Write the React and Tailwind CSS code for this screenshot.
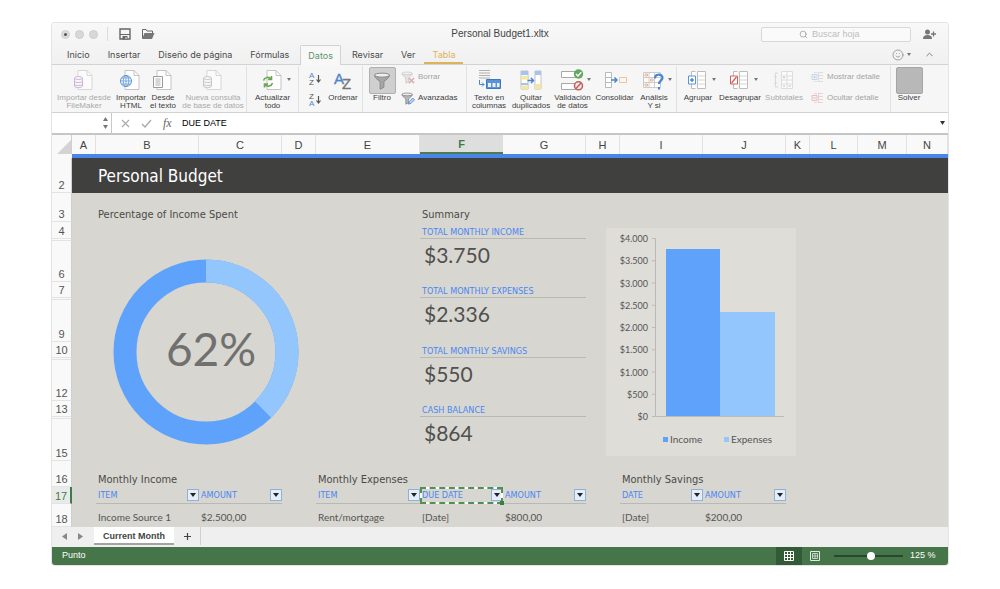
import { ChevronUp, Search, Smile } from 'lucide-react';

const LABEL_FONT = "font-['Tahoma','DejaVu_Sans_Condensed',sans-serif]";
const VALUE_FONT = "font-['Century_Gothic','Lato',sans-serif]";

const tabs = ['Inicio', 'Insertar', 'Diseño de página', 'Fórmulas', 'Datos', 'Revisar', 'Ver', 'Tabla'];

const columns = [
  { name: 'A', width: 'w-[24px]' },
  { name: 'B', width: 'w-[103px]' },
  { name: 'C', width: 'w-[83px]' },
  { name: 'D', width: 'w-[34px]' },
  { name: 'E', width: 'w-[104px]' },
  { name: 'F', width: 'w-[83px]' },
  { name: 'G', width: 'w-[83px]' },
  { name: 'H', width: 'w-[34px]' },
  { name: 'I', width: 'w-[83px]' },
  { name: 'J', width: 'w-[83px]' },
  { name: 'K', width: 'w-[24px]' },
  { name: 'L', width: 'w-[48px]' },
  { name: 'M', width: 'w-[49px]' },
  { name: 'N', width: '' },
];

const summary = [
  { label: 'TOTAL MONTHLY INCOME', value: '$3.750', row: 4 },
  { label: 'TOTAL MONTHLY EXPENSES', value: '$2.336', row: 7 },
  { label: 'TOTAL MONTHLY SAVINGS', value: '$550', row: 10 },
  { label: 'CASH BALANCE', value: '$864', row: 13 },
];

const axisLabels = ['$4.000', '$3.500', '$3.000', '$2.500', '$2.000', '$1.500', '$1.000', '$500', '$0'];

/* ---------- ribbon icons ---------- */

const Icon = ({ children, w = 24 }) => (
  <svg width={w} height="22" viewBox={`0 0 ${w} 22`} fill="none" aria-hidden="true">
    {children}
  </svg>
);

const Page = () => (
  <>
    <path d="M6 1.500h9l5 5v14H6z" fill="#fff" stroke="#bdbdbd" strokeWidth="0.9" />
    <path d="M15 1.500v5h5" stroke="#bdbdbd" strokeWidth="0.9" />
  </>
);

const Cylinder = ({ color }) => (
  <g stroke={color} fill="#f7f7f7">
    <path d="M2.500 9v8c0 1 1.600 1.500 4 1.500s4-.5 4-1.500V9" />
    <path d="M2.500 12c0 1 1.600 1.500 4 1.500s4-.5 4-1.500M2.500 15c0 1 1.600 1.500 4 1.500s4-.5 4-1.500" fill="none" />
    <ellipse cx="6.500" cy="9" rx="4" ry="1.500" />
  </g>
);

const FileMakerIcon = () => (
  <Icon>
    <g opacity="0.6">
      <Page />
      <Cylinder color="#b48bc8" />
    </g>
  </Icon>
);

const QueryIcon = () => (
  <Icon>
    <g opacity="0.6">
      <Page />
      <Cylinder color="#a8a8a8" />
    </g>
  </Icon>
);

const HtmlIcon = () => (
  <Icon>
    <Page />
    <circle cx="7" cy="12" r="5.500" fill="#f4f9fe" stroke="#5a94d6" />
    <path d="M1.500 12h11M7 6.500v11M2.500 9h9M2.500 15h9" stroke="#5a94d6" strokeWidth="0.7" />
    <ellipse cx="7" cy="12" rx="2.800" ry="5.500" stroke="#5a94d6" strokeWidth="0.8" />
  </Icon>
);

const TextIcon = () => (
  <Icon>
    <Page />
    <path d="M2.500 7.500h9v11h-9z" fill="#fff" stroke="#9a9a9a" />
    <path d="M4.500 10h5M4.500 12h5M4.500 14h5M4.500 16h5" stroke="#9a9a9a" strokeWidth="0.8" />
  </Icon>
);

const RefreshIcon = () => (
  <Icon>
    <Page />
    <path d="M2.500 11.500c1-3.500 5.500-4 7.500-1.500M10.500 7v3.500H7M11.500 14c-1 3.500-5.500 4-7.500 1.500M3.500 18.500V15H7" stroke="#6aa84f" strokeWidth="1.600" />
  </Icon>
);

const SortIcon = ({ top, bottom }) => (
  <svg width="14" height="15" viewBox="0 0 14 15" fill="none" aria-hidden="true">
    <text x="1" y="7" fontSize="8" fill={top === 'A' ? '#4f87cc' : '#555'} fontFamily="Liberation Sans">{top}</text>
    <text x="1" y="14" fontSize="8" fill={bottom === 'A' ? '#4f87cc' : '#555'} fontFamily="Liberation Sans">{bottom}</text>
    <path d="M10.500 4v7M8.500 8.500l2 2.500 2-2.500" stroke="#555" strokeWidth="1.200" />
  </svg>
);

const OrderIcon = () => (
  <Icon>
    <text x="3" y="15" fontSize="15" fill="#4f87cc" stroke="#4f87cc" strokeWidth="0.4" fontFamily="Liberation Sans">A</text>
    <text x="11" y="20" fontSize="15" fill="#777" stroke="#777" strokeWidth="0.4" fontFamily="Liberation Sans">Z</text>
  </Icon>
);

const FunnelShape = ({ color = '#8b8b8b', fill = '#b9b9b9' }) => (
  <>
    <path d="M1 3c0 1.500 2 3 4.500 5v6l3-1.500V8C11 6 13 4.500 13 3z" fill={fill} stroke={color} strokeWidth="0.8" />
    <ellipse cx="7" cy="2.800" rx="6" ry="1.600" fill="#eee" stroke={color} strokeWidth="0.8" />
  </>
);

const FilterIcon = () => (
  <svg width="20" height="20" viewBox="-1 0 16 15" aria-hidden="true"><FunnelShape color="#8a8a8a" fill="#a6a6a6" /></svg>
);

const ClearFilterIcon = () => (
  <svg width="14" height="13" viewBox="0 0 16 15" fill="none" aria-hidden="true">
    <g opacity="0.5">
      <FunnelShape fill="#d6d6d6" />
      <path d="M9 8l6 6M15 8l-6 6" stroke="#cc6262" strokeWidth="1.800" />
    </g>
  </svg>
);

const AdvancedFilterIcon = () => (
  <svg width="14" height="13" viewBox="0 0 16 15" fill="none" aria-hidden="true">
    <FunnelShape color="#777" />
    <path d="M8.500 14l1-3 4-4 2 2-4 4z" fill="#bcd6f5" stroke="#4a84cf" />
  </svg>
);

const ColumnsIcon = () => (
  <Icon>
    <path d="M2 1.500h11M2 4h11M2 6.500h11M2 9h11" stroke="#b0b0b0" />
    <path d="M9.500 10.500h14v9h-14z" fill="#5b93d8" stroke="#3f78c0" />
    <path d="M11 14h3v4h-3zM15.500 14h3v4h-3zM20 14h2.500v4H20z" fill="#e9f2fc" />
    <path d="M2.500 11v4.500h4.500M5 13.500l2 2-2 2" stroke="#4a86d0" />
  </Icon>
);

const DuplicatesIcon = () => (
  <Icon>
    <path d="M2 2h7v18H2zM16 2h6v18h-6z" fill="#fff" stroke="#b5b5b5" strokeWidth="0.8" />
    <path d="M2 2h7v4H2zM2 14h7v2H2zM16 2h6v4h-6z" fill="#a5c4ee" />
    <path d="M2 7h7v3.500H2zM2 16.500h7V20H2zM16 15h6v5h-6z" fill="#f6e79f" />
    <path d="M8.500 11.500h6M12 9l2.500 2.500L12 14" stroke="#4a86d0" strokeWidth="1.500" />
  </Icon>
);

const ValidationIcon = () => (
  <Icon>
    <path d="M.5 2.500h14v6H.5zM.5 14.500h14v6H.5z" fill="#fff" stroke="#a8a8a8" />
    <circle cx="17.500" cy="5" r="4.700" fill="#62a960" />
    <path d="M15 5l2 2 3.300-3.800" stroke="#fff" strokeWidth="1.400" />
    <circle cx="17.500" cy="16.800" r="4" fill="#f8e9e9" stroke="#c4605d" strokeWidth="1.600" />
    <path d="M15 19.500l5-5.500" stroke="#c4605d" strokeWidth="1.500" />
  </Icon>
);

const ConsolidateIcon = () => (
  <Icon>
    <path d="M2.500 3.500h6v15h-6zM2.500 8.500h6M2.500 13.500h6" fill="#fff" stroke="#b9b9b9" />
    <path d="M16.500 8.500h7v5h-7z" fill="#fff6ee" stroke="#ecc5a6" />
    <path d="M8 11h6M11.500 8.500L14 11l-2.500 2.500" stroke="#4a86d0" strokeWidth="1.500" />
  </Icon>
);

const WhatIfIcon = () => (
  <Icon>
    <path d="M1.500 3.500h17v15h-17zM1.500 8.500h17M1.500 13.500h17M7 3.500v15M12.500 3.500v15" fill="#fff" stroke="#c2c2c2" strokeWidth="0.8" />
    <path d="M3 5h2.500v2H3zM8.500 10h2.500v2H8.500zM3 15h2.500v2H3z" stroke="#e8b08c" />
    <path d="M13 9.500c0-5 7.500-5 7.500-.8 0 3-3.500 3-3.500 6.300M17 18v2.500" stroke="#4a86d0" strokeWidth="2.200" />
  </Icon>
);

const GroupIcon = ({ ungroup }) => (
  <Icon>
    <path d="M9.500 2.500h-4v17h4M11.500 2.500h8v17h-8z" fill="#fff" stroke="#bdbdbd" />
    <path d="M12 7h7M12 11h7M12 15h7" stroke="#d4d4d4" />
    <path d="M2.500 7h7v8h-7z" fill="#fff" stroke={ungroup ? '#d0605c' : '#5a94d6'} />
    <path d={ungroup ? 'M3.500 14l5-6' : 'M6 9v4M4 11h4'} stroke={ungroup ? '#d0605c' : '#4a86d0'} strokeWidth="1.300" />
  </Icon>
);

const SubtotalIcon = () => (
  <Icon>
    <g opacity="0.6">
      <path d="M9.500 2.500h11v17h-11zM9.500 7h11M9.500 11h11M9.500 15h11M15 2.500v17" fill="#fff" stroke="#cdcdcd" />
      <path d="M6 4H3.500v14H6M2 8h3M2 14h3" stroke="#c6c6c6" />
      <path d="M11 8.500h2M11 17h2M16.500 17h2.500" stroke="#d88" />
    </g>
  </Icon>
);

const DetailIcon = ({ hide }) => (
  <svg width="13" height="12" viewBox="0 0 13 12" fill="none" aria-hidden="true" className="opacity-50">
    <path d="M3 1.500h3M3 10.500h3M7.500 1v10M7.500 1.500H12M7.500 4.500H12M7.500 7.500H12M7.500 10.500H12" stroke={hide ? '#dba0a0' : '#b9b9b9'} strokeWidth="0.8" />
    <path d="M1 3.500h5v5H1zM2 6h3" stroke={hide ? '#d77' : '#8fb0d8'} strokeWidth="0.9" />
    {!hide && <path d="M3.500 4.500v3" stroke="#8fb0d8" />}
  </svg>
);

const Caret = ({ className = '' }) => (
  <svg width="4" height="3" viewBox="0 0 4 3" aria-hidden="true" className={className}>
    <path d="M0 0h4L2 3z" fill="#777" />
  </svg>
);

/* ---------- ribbon ---------- */

function RibbonButton({ icon, lines, width, muted, menu }) {
  return (
    <button className={`flex shrink-0 flex-col items-center text-[8px] leading-[8px] ${width} ${muted ? 'text-[#a9a9a9]' : 'text-[#3d3d3d]'}`}>
      <span className="relative mb-[3px] flex h-[22px] items-center">
        {icon}
        {menu && <Caret className="absolute top-[9px] -right-[6px]" />}
      </span>
      {lines.map((line) => (
        <span key={line} className="whitespace-nowrap">{line}</span>
      ))}
    </button>
  );
}

const Divider = () => <span className="-my-[3px] w-px shrink-0 bg-[#e0e0e0]" />;

function SmallButton({ icon, label, muted }) {
  return (
    <button className={`flex items-center gap-[3px] text-[8px] leading-[14px] whitespace-nowrap ${muted ? 'text-[#a3a3a3]' : 'text-[#3d3d3d]'}`}>
      {icon}
      {label}
    </button>
  );
}

function Ribbon() {
  return (
    <div className="flex h-[49px] overflow-hidden border-t border-b border-[#d2d2d2] bg-[#f6f6f6] pt-[4px]">
      <RibbonButton icon={<FileMakerIcon />} lines={['Importar desde', 'FileMaker']} width="w-[64px]" muted />
      <RibbonButton icon={<HtmlIcon />} lines={['Importar', 'HTML']} width="w-[30px]" />
      <RibbonButton icon={<TextIcon />} lines={['Desde', 'el texto']} width="w-[34px]" />
      <RibbonButton icon={<QueryIcon />} lines={['Nueva consulta', 'de base de datos']} width="w-[66px]" muted />
      <Divider />
      <RibbonButton icon={<RefreshIcon />} lines={['Actualizar', 'todo']} width="w-[51px]" menu />
      <Divider />
      <div className="flex w-[31px] shrink-0 flex-col items-center gap-[6px] pt-[2px]">
        <button aria-label="Orden ascendente"><SortIcon top="A" bottom="Z" /></button>
        <button aria-label="Orden descendente"><SortIcon top="Z" bottom="A" /></button>
      </div>
      <RibbonButton icon={<OrderIcon />} lines={['Ordenar']} width="w-[26px]" />
      <span className="w-[6px] shrink-0" />
      <Divider />
      <button className="flex w-[38px] shrink-0 flex-col items-center text-[8px] leading-[8px] text-[#3d3d3d]">
        <span className="-mt-[2px] flex h-[27px] w-[27px] items-center justify-center rounded-xs border border-[#b0b0b0] bg-[#cfcfcf]">
          <FilterIcon />
        </span>
        Filtro
      </button>
      <div className="flex w-[65px] shrink-0 flex-col gap-[7px] pt-px">
        <SmallButton icon={<ClearFilterIcon />} label="Borrar" muted />
        <SmallButton icon={<AdvancedFilterIcon />} label="Avanzadas" />
      </div>
      <Divider />
      <RibbonButton icon={<ColumnsIcon />} lines={['Texto en', 'columnas']} width="w-[44px]" />
      <RibbonButton icon={<DuplicatesIcon />} lines={['Quitar', 'duplicados']} width="w-[40px]" />
      <RibbonButton icon={<ValidationIcon />} lines={['Validación', 'de datos']} width="w-[43px]" menu />
      <RibbonButton icon={<ConsolidateIcon />} lines={['Consolidar']} width="w-[41px]" />
      <RibbonButton icon={<WhatIfIcon />} lines={['Análisis', 'Y si']} width="w-[38px]" menu />
      <span className="w-[3px] shrink-0" />
      <Divider />
      <RibbonButton icon={<GroupIcon />} lines={['Agrupar']} width="w-[42px]" menu />
      <RibbonButton icon={<GroupIcon ungroup />} lines={['Desagrupar']} width="w-[42px]" menu />
      <RibbonButton icon={<SubtotalIcon />} lines={['Subtotales']} width="w-[46px]" muted />
      <div className="ml-[4px] flex w-[79px] shrink-0 flex-col gap-[7px] pt-px">
        <SmallButton icon={<DetailIcon />} label="Mostrar detalle" muted />
        <SmallButton icon={<DetailIcon hide />} label="Ocultar detalle" muted />
      </div>
      <Divider />
      <button className="flex w-[36px] shrink-0 flex-col items-center text-[8px] leading-[8px] text-[#3d3d3d]">
        <span className="-mt-[2px] h-[27px] w-[27px] rounded-xs border border-[#a5a5a5] bg-[#b8b8b8]" />
        Solver
      </button>
    </div>
  );
}

function TitleBar() {
  return (
    <header className="grid h-[22px] grid-cols-[1fr_auto_1fr] items-center px-[9px]">
      <div className="flex items-center">
        <div className="flex gap-[5px]">
          <button aria-label="Cerrar" className="flex size-[9px] items-center justify-center rounded-full border border-[#d0d0d0] bg-[#dcdcdc]">
            <span className="size-[3px] rounded-full bg-[#555]" />
          </button>
          <button aria-label="Minimizar" className="size-[9px] rounded-full border border-[#cdcdcd] bg-[#d8d8d8]" />
          <button aria-label="Ampliar" className="size-[9px] rounded-full border border-[#cdcdcd] bg-[#d8d8d8]" />
        </div>
        <span className="ml-[9px] h-[14px] w-px bg-[#dcdcdc]" />
        <button aria-label="Guardar" className="ml-[11px]">
          <svg width="12" height="12" viewBox="0 0 12 12" fill="none" aria-hidden="true">
            <path d="M1 1h10v10H1z" stroke="#666" strokeWidth="1.400" />
            <path d="M1 6.500h10" stroke="#666" />
            <path d="M3.500 8h5v3.500h-5z" fill="#666" />
            <path d="M6.500 9h1v2h-1z" fill="#eee" />
          </svg>
        </button>
        <button aria-label="Abrir" className="ml-[10px]">
          <svg width="14" height="12" viewBox="0 0 14 12" fill="none" aria-hidden="true">
            <path d="M1.500 10V1.500h3.500l1 1.500h5.500v2" stroke="#666" />
            <path d="M1 11l2.500-6H13.500L11 11z" fill="#777" />
          </svg>
        </button>
      </div>
      <h1 className="text-[10px] leading-[14px] text-[#444]">Personal Budget1.xltx</h1>
      <div className="flex items-center justify-end gap-[12px]">
        <label className="flex h-[15px] w-[150px] items-center rounded-xs border border-[#d8d8d8] bg-[#fafafa] pl-[37px]">
          <Search size={9} color="#999" className="shrink-0" />
          <input type="search" aria-label="Buscar hoja" placeholder="Buscar hoja" className="ml-[4px] h-[13px] w-full min-w-0 bg-transparent text-[9px] leading-[13px] outline-none placeholder:text-[#bdbdbd]" />
        </label>
        <button aria-label="Compartir" className="mr-[3px]">
          <svg width="13" height="11" viewBox="0 0 13 11" aria-hidden="true">
            <circle cx="4.500" cy="3" r="2.500" fill="#777" />
            <path d="M0 10c0-3 1.500-4 4.500-4S9 7 9 10z" fill="#777" />
            <path d="M10.500 2.500v5M8 5h5" stroke="#777" strokeWidth="1.300" />
          </svg>
        </button>
      </div>
    </header>
  );
}

function TabBar() {
  return (
    <nav className="flex h-[19px] items-end pl-[6px] font-['Inter',sans-serif] text-[9px] leading-[18px] text-[#4a4a4a]">
      {tabs.map((tab) => {
        if (tab === 'Datos') {
          return (
            <button key={tab} className="relative mx-[2px] -mb-px h-[20px] rounded-t-xs border border-b-0 border-[#d2d2d2] bg-[#f8f8f8] px-[7px] text-[#5c9568]">
              {tab}
            </button>
          );
        }
        if (tab === 'Tabla') {
          return (
            <button key={tab} className="h-[18px] border-b-2 border-[#dcb35a] px-[8px] text-[#dcb35a]">{tab}</button>
          );
        }
        return <button key={tab} className="px-[9px]">{tab}</button>;
      })}
      <div className="ml-auto flex h-full items-center gap-[4px] pr-[13px]">
        <button aria-label="Comentarios" className="flex items-center gap-[3px]">
          <Smile size={12} color="#888" strokeWidth={1.500} />
          <Caret />
        </button>
        <button aria-label="Contraer cinta" className="ml-[9px]"><ChevronUp size={11} color="#777" /></button>
      </div>
    </nav>
  );
}

function FormulaBar() {
  return (
    <div className="flex h-[20px] items-center bg-white text-[9px]">
      <div className="flex h-full w-[60px] items-center justify-end border-r border-[#c9c9c9] pr-[3px]">
        <svg width="5" height="12" viewBox="0 0 5 12" fill="#777" aria-hidden="true">
          <path d="M0 4h5L2.500 0zM0 8h5l-2.500 4z" />
        </svg>
      </div>
      <div className="flex w-[70px] items-center gap-[11px] pl-[9px]">
        <button aria-label="Cancelar">
          <svg width="9" height="9" viewBox="0 0 9 9" aria-hidden="true"><path d="M1 1l7 7M8 1L1 8" stroke="#aaa" strokeWidth="1.200" /></svg>
        </button>
        <button aria-label="Aceptar">
          <svg width="11" height="9" viewBox="0 0 11 9" fill="none" aria-hidden="true"><path d="M1 5l3 3 6-7" stroke="#aaa" strokeWidth="1.400" /></svg>
        </button>
        <button aria-label="Insertar función" className="font-['Liberation_Serif',serif] text-[12px] leading-[14px] text-[#666] italic">fx</button>
      </div>
      <input aria-label="Barra de fórmulas" defaultValue="DUE DATE" className="h-[18px] min-w-0 flex-1 text-[9px] text-black outline-none" />
      <button aria-label="Expandir" className="pr-[3px]">
        <svg width="5" height="4" viewBox="0 0 5 4" aria-hidden="true"><path d="M0 0h5L2.500 4z" fill="#333" /></svg>
      </button>
    </div>
  );
}

/* ---------- sheet ---------- */

function RowHeader({ n, active }) {
  return (
    <th scope="row" className={`border-b p-0 align-bottom text-[11px] leading-[13px] font-normal ${active ? 'border-r-2 border-b-[#e3e3e3] border-r-[#3f7a4a] bg-[#eaeaea] text-[#3f7a4a]' : 'border-r border-b-[#e3e3e3] border-r-[#cfcfcf] bg-[#f9f9f9] text-[#555]'}`}>
      {n}
    </th>
  );
}

function Donut() {
  // 62% spent in dark blue, what is left in light blue
  const radius = 81;
  const length = 2 * Math.PI * radius;
  return (
    <svg width="186" height="186" viewBox="0 0 186 186" role="img" aria-label="62%" className="mx-auto mt-[37px] block">
      <circle cx="93" cy="93" r={radius} fill="none" stroke="#5ea2fb" strokeWidth="23" />
      <circle cx="93" cy="93" r={radius} fill="none" stroke="#93c6fd" strokeWidth="23" strokeDasharray={`${length * 0.375} ${length}`} transform="rotate(-90 93 93)" />
      <text x="98" y="107" textAnchor="middle" fontSize="46" fill="#70706e" className="font-['Century_Gothic','Lato',sans-serif]">62%</text>
    </svg>
  );
}

function BarChart() {
  return (
    <svg width="190" height="228" viewBox="0 0 190 228" role="img" aria-label="Income, Expenses" className={`mt-[6px] ml-[20px] block bg-[#deddd8] ${VALUE_FONT}`}>
      {axisLabels.map((label, i) => (
        <g key={label}>
          <text x="42" y={14 + i * 22.25} textAnchor="end" fontSize="9" fill="#555">{label}</text>
          <path d={`M46 ${10.5 + i * 22.25}h3`} stroke="#b9b9b5" />
        </g>
      ))}
      <path d="M49.500 10v178.500H178" fill="none" stroke="#b9b9b5" />
      <rect x="60" y="21" width="54" height="167" fill="#5ea2fb" />
      <rect x="114" y="84" width="55" height="104" fill="#93c6fd" />
      <rect x="57" y="209" width="5" height="5" fill="#5ea2fb" />
      <text x="64" y="215" fontSize="10" fill="#555">Income</text>
      <rect x="118" y="209" width="5" height="5" fill="#93c6fd" />
      <text x="125" y="215" fontSize="10" fill="#555">Expenses</text>
    </svg>
  );
}

const Heading = ({ children, span }) => (
  <td colSpan={span} className={`p-0 pl-[2px] align-bottom text-[11px] leading-[14px] whitespace-nowrap text-[#4b4b49] ${LABEL_FONT}`}>{children}</td>
);

function FilterCell({ children, selected }) {
  return (
    <th scope="col" className={`relative border-b border-[#b9b9b4] p-0 pl-[2px] text-left text-[9px] leading-[14px] font-normal text-[#4a86f2] ${LABEL_FONT}`}>
      <div className="flex items-center justify-between">
        {children}
        <button aria-label={`Filtrar ${children}`} className="flex size-[12px] items-center justify-center border border-[#8fb1d8] bg-[#e3eefa]">
          <svg width="6" height="4" viewBox="0 0 6 4" aria-hidden="true"><path d="M0 0h6L3 4z" fill="#222" /></svg>
        </button>
      </div>
      {selected && (
        <span className="pointer-events-none absolute inset-0 z-10 -mb-px border-2 border-white">
          <span className="absolute -inset-[2px] border-2 border-dashed border-[#4f9150]" />
          <span className="absolute -right-[3px] -bottom-[3px] size-[4px] bg-[#3f7a4a]" />
        </span>
      )}
    </th>
  );
}

const ValueCell = ({ children }) => (
  <td className={`p-0 pt-[2px] pl-[2px] align-middle text-[10px] leading-[12px] whitespace-nowrap text-[#555] ${VALUE_FONT}`}>{children}</td>
);

function SummaryRows({ item, first }) {
  return (
    <>
      <tr className={first ? 'h-[17px]' : 'h-[16px]'}>
        <RowHeader n={item.row} />
        {first && (
          <>
            <td rowSpan={12} />
            <td colSpan={3} rowSpan={12} className="p-0 align-top"><Donut /></td>
            <td rowSpan={12} />
          </>
        )}
        <td colSpan={2} className={`border-b border-[#b9b9b4] p-0 pl-[2px] align-bottom text-[9px] leading-[12px] text-[#4a86f2] ${LABEL_FONT}`}>{item.label}</td>
        {first && (
          <>
            <td colSpan={4} rowSpan={12} className="p-0 align-top"><BarChart /></td>
            <td colSpan={3} rowSpan={12} />
          </>
        )}
      </tr>
      <tr className="h-[2px]">
        <RowHeader />
        <td colSpan={2} className="p-0" />
      </tr>
      <tr className={item.row === 7 || item.row === 13 ? 'h-[42px]' : 'h-[41px]'}>
        <RowHeader n={item.row + 2} />
        <td colSpan={2} className={`p-0 pt-[2px] pl-[4px] align-top text-[21px] leading-[24px] text-[#50504e] ${VALUE_FONT}`}>{item.value}</td>
      </tr>
    </>
  );
}

function Sheet() {
  return (
    <div className="overflow-hidden border-t-2 border-[#c6c6c6]">
      <table className="w-full table-fixed border-separate border-spacing-0 bg-[#d7d6d0]">
        <colgroup>
          <col className="w-[20px]" />
          {columns.map((col) => <col key={col.name} className={col.width} />)}
        </colgroup>
        <thead>
          <tr className="h-[19px]">
            <th className="border-r border-[#cfcfcf] bg-[#f9f9f9] p-0 align-bottom">
              <svg width="14" height="14" viewBox="0 0 14 14" aria-hidden="true" className="ml-auto block"><path d="M14 0v14H0z" fill="#d3d3d3" /></svg>
            </th>
            {columns.map(({ name }) => (
              <th key={name} scope="col" className={`p-0 text-[11px] leading-[14px] ${name === 'F' ? 'border-b-2 border-[#4a7d50] bg-[#dedede] font-bold text-[#3f7a4a]' : 'border-r border-[#e2e2e2] bg-[#f9f9f9] font-normal text-[#444]'}`}>
                {name}
              </th>
            ))}
          </tr>
        </thead>
        <tbody>
          <tr className="h-[4px]">
            <th className="bg-[#f9f9f9] p-0" />
            <td colSpan={14} className="bg-[#4a86e8] p-0" />
          </tr>
          <tr className="h-[35px]">
            <RowHeader n={2} />
            <td className="bg-[#40403f] p-0" />
            <td colSpan={13} className={`bg-[#40403f] p-0 pl-[2px] text-[17px] leading-[24px] text-white ${LABEL_FONT}`}>Personal Budget</td>
          </tr>
          <tr className="h-[29px]">
            <RowHeader n={3} />
            <td />
            <Heading span={3}>Percentage of Income Spent</Heading>
            <td />
            <Heading span={2}>Summary</Heading>
            <td colSpan={7} />
          </tr>
          {summary.map((item, i) => <SummaryRows key={item.label} item={item} first={i === 0} />)}
          <tr className="h-[26px]">
            <RowHeader n={16} />
            <td />
            <Heading span={3}>Monthly Income</Heading>
            <Heading span={4}>Monthly Expenses</Heading>
            <Heading span={2}>Monthly Savings</Heading>
            <td colSpan={4} />
          </tr>
          <tr className="h-[17px]">
            <RowHeader n={17} active />
            <td />
            <FilterCell>ITEM</FilterCell>
            <FilterCell>AMOUNT</FilterCell>
            <td />
            <FilterCell>ITEM</FilterCell>
            <FilterCell selected>DUE DATE</FilterCell>
            <FilterCell>AMOUNT</FilterCell>
            <td />
            <FilterCell>DATE</FilterCell>
            <FilterCell>AMOUNT</FilterCell>
            <td colSpan={4} />
          </tr>
          <tr className="h-[23px]">
            <RowHeader n={18} />
            <td />
            <ValueCell>Income Source 1</ValueCell>
            <ValueCell>$2.500,00</ValueCell>
            <td />
            <ValueCell>Rent/mortgage</ValueCell>
            <ValueCell>[Date]</ValueCell>
            <ValueCell>$800,00</ValueCell>
            <td />
            <ValueCell>[Date]</ValueCell>
            <ValueCell>$200,00</ValueCell>
            <td colSpan={4} />
          </tr>
        </tbody>
      </table>
    </div>
  );
}

function SheetTabs() {
  return (
    <div className="flex h-[20px] items-start bg-[#efefef] pl-[10px]">
      <div className="flex h-[18px] w-[32px] items-center gap-[11px]">
        <button aria-label="Hoja anterior"><svg width="5" height="7" viewBox="0 0 5 7" aria-hidden="true"><path d="M5 0v7L0 3.500z" fill="#888" /></svg></button>
        <button aria-label="Hoja siguiente"><svg width="5" height="7" viewBox="0 0 5 7" aria-hidden="true"><path d="M0 0v7l5-3.500z" fill="#888" /></svg></button>
      </div>
      <button className="h-[18px] border-b-2 border-[#a3a3a3] bg-white px-[9px] pt-[2px] text-[9px] leading-[14px] font-bold text-[#444]">Current Month</button>
      <button aria-label="Nueva hoja" className="flex h-[18px] w-[27px] items-center justify-center border-r border-[#cfcfcf]">
        <svg width="7" height="7" viewBox="0 0 7 7" aria-hidden="true"><path d="M3.500 0v7M0 3.500h7" stroke="#444" strokeWidth="1.200" /></svg>
      </button>
    </div>
  );
}

function StatusBar() {
  return (
    <footer className="flex h-[18px] items-center bg-[#467549] pl-[10px] text-[9px] text-white">
      <span>Punto</span>
      <div className="ml-auto flex h-full items-center">
        <button aria-label="Vista normal" className="flex h-full w-[26px] items-center justify-center bg-[#335a37]">
          <svg width="10" height="10" viewBox="0 0 10 10" fill="none" aria-hidden="true"><path d="M.5.5h9v9h-9zM.5 3.500h9M.5 6.500h9M3.500.5v9M6.500.5v9" stroke="#fff" /></svg>
        </button>
        <button aria-label="Diseño de página" className="flex h-full w-[25px] items-center justify-center">
          <svg width="10" height="10" viewBox="0 0 10 10" fill="none" aria-hidden="true"><path d="M.5.5h9v9h-9z" stroke="#dfe9df" /><path d="M2.500 2.500h5v5h-5zM2.500 5h5M5 2.500v5" stroke="#dfe9df" strokeWidth="0.8" /></svg>
        </button>
        <input
          type="range"
          aria-label="Zoom"
          min="10"
          max="220"
          defaultValue="125"
          className="mx-[7px] h-[2px] w-[69px] appearance-none bg-[#28482b] [&::-webkit-slider-thumb]:size-[8px] [&::-webkit-slider-thumb]:appearance-none [&::-webkit-slider-thumb]:rounded-full [&::-webkit-slider-thumb]:bg-white"
        />
        <span className="w-[38px]">125 %</span>
      </div>
    </footer>
  );
}

export default function App() {
  return (
    <main className="min-h-screen bg-white px-[52px] pt-[23px] pb-6 font-['Liberation_Sans',sans-serif]">
      <div className="overflow-hidden rounded-[3px] bg-linear-to-b from-[#f8f8f8] from-0% to-[#f0f0f0] to-8% shadow-[0_0_0_1px_#e4e4e4]">
        <TitleBar />
        <TabBar />
        <Ribbon />
        <FormulaBar />
        <Sheet />
        <SheetTabs />
        <StatusBar />
      </div>
    </main>
  );
}
